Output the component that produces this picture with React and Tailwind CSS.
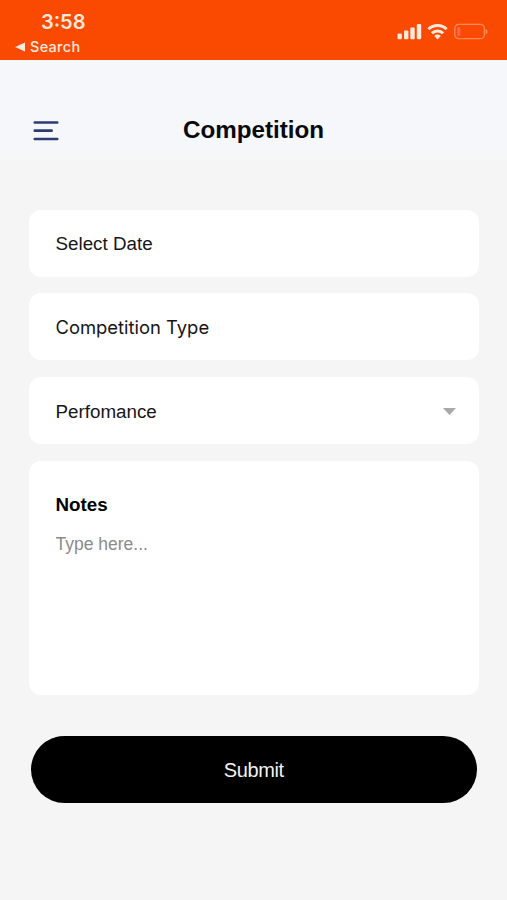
import React, { useState } from 'react';

function StatusBar() {
  return (
    <div className="h-[60px] bg-[#fa4a02] flex justify-between text-[#ffe9dc] font-['Inter',sans-serif]">
      <div className="pl-[15px] pt-[10px]">
        <div className="pl-[26px] h-[25px] leading-[25px] text-[20px] font-semibold">3:58</div>
        <div className="flex items-center h-[24px] text-[14.4px] font-medium tracking-[0.35px]">
          <svg width="10" height="10" viewBox="0 0 10 10" className="mr-[5px]">
            <path d="M10 0.5v9L0 5z" fill="currentColor" />
          </svg>
          Search
        </div>
      </div>
      <div className="flex items-start pt-[23px] pr-[19px]">
        <svg width="25" height="17" viewBox="0 0 25 17" fill="currentColor">
          <rect x="0.5" y="10.5" width="4.4" height="5.8" rx="1" />
          <rect x="7" y="7.5" width="4.4" height="8.8" rx="1" />
          <rect x="13.3" y="4.5" width="4.4" height="11.8" rx="1" />
          <rect x="19.8" y="1" width="4.4" height="15.3" rx="1" />
        </svg>
        <svg width="21" height="17" viewBox="0 0 21 17" className="ml-[5px]" fill="none" stroke="currentColor" strokeWidth="3">
          <path d="M1.4 6.2a13 13 0 0 1 18.2 0" />
          <path d="M4.9 10.3a7.9 7.9 0 0 1 11.2 0" />
          <path d="M10.5 16.4l-3.3-3.3a4.4 4.4 0 0 1 6.6 0z" fill="currentColor" stroke="none" />
        </svg>
        <svg width="34" height="17" viewBox="0 0 34 17" className="ml-[6px]">
          <rect x="0.8" y="1.3" width="29.6" height="14.4" rx="4" fill="none" stroke="#ff8a5c" strokeWidth="1.3" />
          <rect x="3" y="4" width="3.4" height="9" rx="1.5" fill="#ff6455" />
          <path d="M31.6 6v5.4c1.3-.5 1.9-1.4 1.9-2.7S32.9 6.5 31.6 6z" fill="#ff8a5c" />
        </svg>
      </div>
    </div>
  );
}

function Header() {
  return (
    <header className="h-[100px] bg-linear-to-b from-[#f5f7fb] from-80% to-[#f6f7f8] grid grid-cols-[1fr_auto_1fr] items-center px-[33px] pt-[40px]">
      <button type="button" className="w-[26px] pt-px" title="Menu">
        <svg width="26" height="22" viewBox="0 0 26 22" stroke="#2c3c73" strokeWidth="2.7" strokeLinecap="round">
          <path d="M1.8 2.5h22.4M1.8 10.7h16.8M1.8 19h22.4" />
        </svg>
      </button>
      <h1 className="text-[24.2px] leading-[28px] font-bold text-[#08090b]">Competition</h1>
    </header>
  );
}

export default function App() {
  const [notes, setNotes] = useState('');

  return (
    <div className="w-full h-[900px] overflow-hidden bg-[#f5f5f5] text-[#161616] font-['Liberation_Sans',Arial,sans-serif]">
      <StatusBar />
      <Header />

      <form className="pt-[49.6px]" onSubmit={e => e.preventDefault()}>
        <div className="ml-[28.5px] mr-[28px] flex flex-col gap-[16.8px] text-[18.8px]">
          <div className="h-[67px] rounded-[12px] bg-white px-[27px] flex items-center pt-[2px]">
            Select Date
          </div>
          <div className="h-[67px] rounded-[12px] bg-white px-[27px] flex items-center pt-[2px] font-['Inter',sans-serif] text-[18.4px]">
            Competition Type
          </div>
          <div className="h-[67px] rounded-[12px] bg-white pl-[27px] pr-[23px] pt-[2px] flex items-center justify-between">
            <span>Perfomance</span>
            <svg width="13" height="7" viewBox="0 0 13 7">
              <path d="M0 0h13L6.5 7z" fill="#a9a9a9" />
            </svg>
          </div>
          <div className="h-[234.5px] rounded-[12px] bg-white px-[27px] pt-[32.5px]">
            <div className="h-[24px] leading-[24px] font-bold text-black">Notes</div>
            <textarea
              className="block w-full h-[130px] mt-[14.5px] resize-none outline-none text-[17.5px] leading-[24px] placeholder:text-[#8b8b8b]"
              placeholder="Type here..."
              value={notes}
              onChange={e => setNotes(e.target.value)}
            />
          </div>
        </div>

        <button
          type="submit"
          className="block ml-[31px] mt-[40.5px] w-[445.5px] h-[67px] pt-px rounded-full bg-black text-[#f2f2f2] text-[20px] tracking-[-0.4px]"
        >
          Submit
        </button>
      </form>
    </div>
  );
}
